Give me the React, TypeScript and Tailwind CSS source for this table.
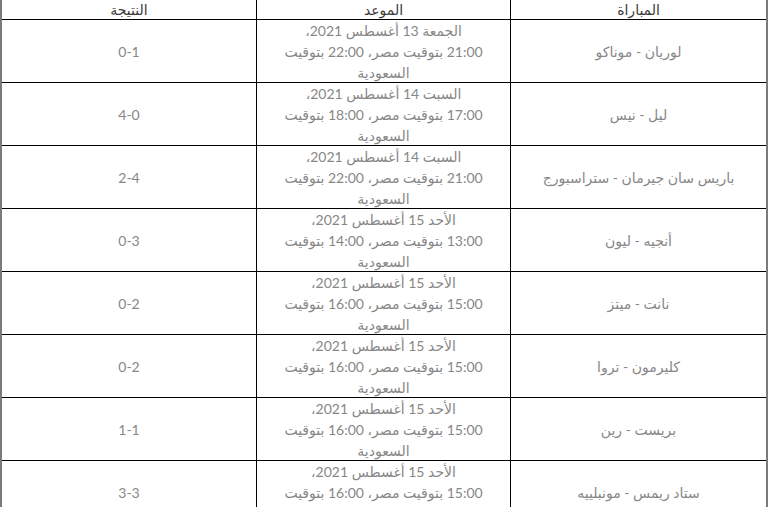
import React from "react";

type Row = { match: string; day: string; times: string; score: string };

const rows: Row[] = [
  { match: "لوريان - موناكو", day: "الجمعة 13 أغسطس 2021،", times: "21:00 بتوقيت مصر، 22:00 بتوقيت", score: "0-1" },
  { match: "ليل - نيس", day: "السبت 14 أغسطس 2021،", times: "17:00 بتوقيت مصر، 18:00 بتوقيت", score: "4-0" },
  { match: "باريس سان جيرمان - ستراسبورج", day: "السبت 14 أغسطس 2021،", times: "21:00 بتوقيت مصر، 22:00 بتوقيت", score: "2-4" },
  { match: "أنجيه - ليون", day: "الأحد 15 أغسطس 2021،", times: "13:00 بتوقيت مصر، 14:00 بتوقيت", score: "0-3" },
  { match: "نانت - ميتز", day: "الأحد 15 أغسطس 2021،", times: "15:00 بتوقيت مصر، 16:00 بتوقيت", score: "0-2" },
  { match: "كليرمون - تروا", day: "الأحد 15 أغسطس 2021،", times: "15:00 بتوقيت مصر، 16:00 بتوقيت", score: "0-2" },
  { match: "بريست - رين", day: "الأحد 15 أغسطس 2021،", times: "15:00 بتوقيت مصر، 16:00 بتوقيت", score: "1-1" },
  { match: "ستاد ريمس - مونبلييه", day: "الأحد 15 أغسطس 2021،", times: "15:00 بتوقيت مصر، 16:00 بتوقيت", score: "3-3" },
];

export default function App() {
  return (
    <div
      className="w-[768px] bg-white border-x-2 border-[#7a7a7a] text-[14px] text-[#878787]"
      style={{ fontFamily: 'Lato, "DejaVu Sans", sans-serif' }}
    >
      <div className="grid grid-cols-[254px_254px_256px] h-[19px] text-[#3a3a3a] font-medium">
        <div dir="rtl" className="flex items-center justify-center leading-[19px]">النتيجة</div>
        <div dir="rtl" className="flex items-center justify-center leading-[19px] border-l border-black">الموعد</div>
        <div dir="rtl" className="flex items-center justify-center leading-[19px] border-l border-black">المباراة</div>
      </div>
      {rows.map((r, i) => (
        <div key={i} className="grid grid-cols-[254px_254px_256px] border-t border-black">
          <div className="h-[62px] flex items-center justify-center">{r.score}</div>
          <div dir="rtl" className="h-[62px] flex flex-col items-center justify-center leading-[21px] border-l border-black whitespace-nowrap">
            <span>{r.day}</span>
            <span>{r.times}</span>
            <span>السعودية</span>
          </div>
          <div dir="rtl" className="h-[62px] flex items-center justify-center border-l border-black">{r.match}</div>
        </div>
      ))}
    </div>
  );
}
